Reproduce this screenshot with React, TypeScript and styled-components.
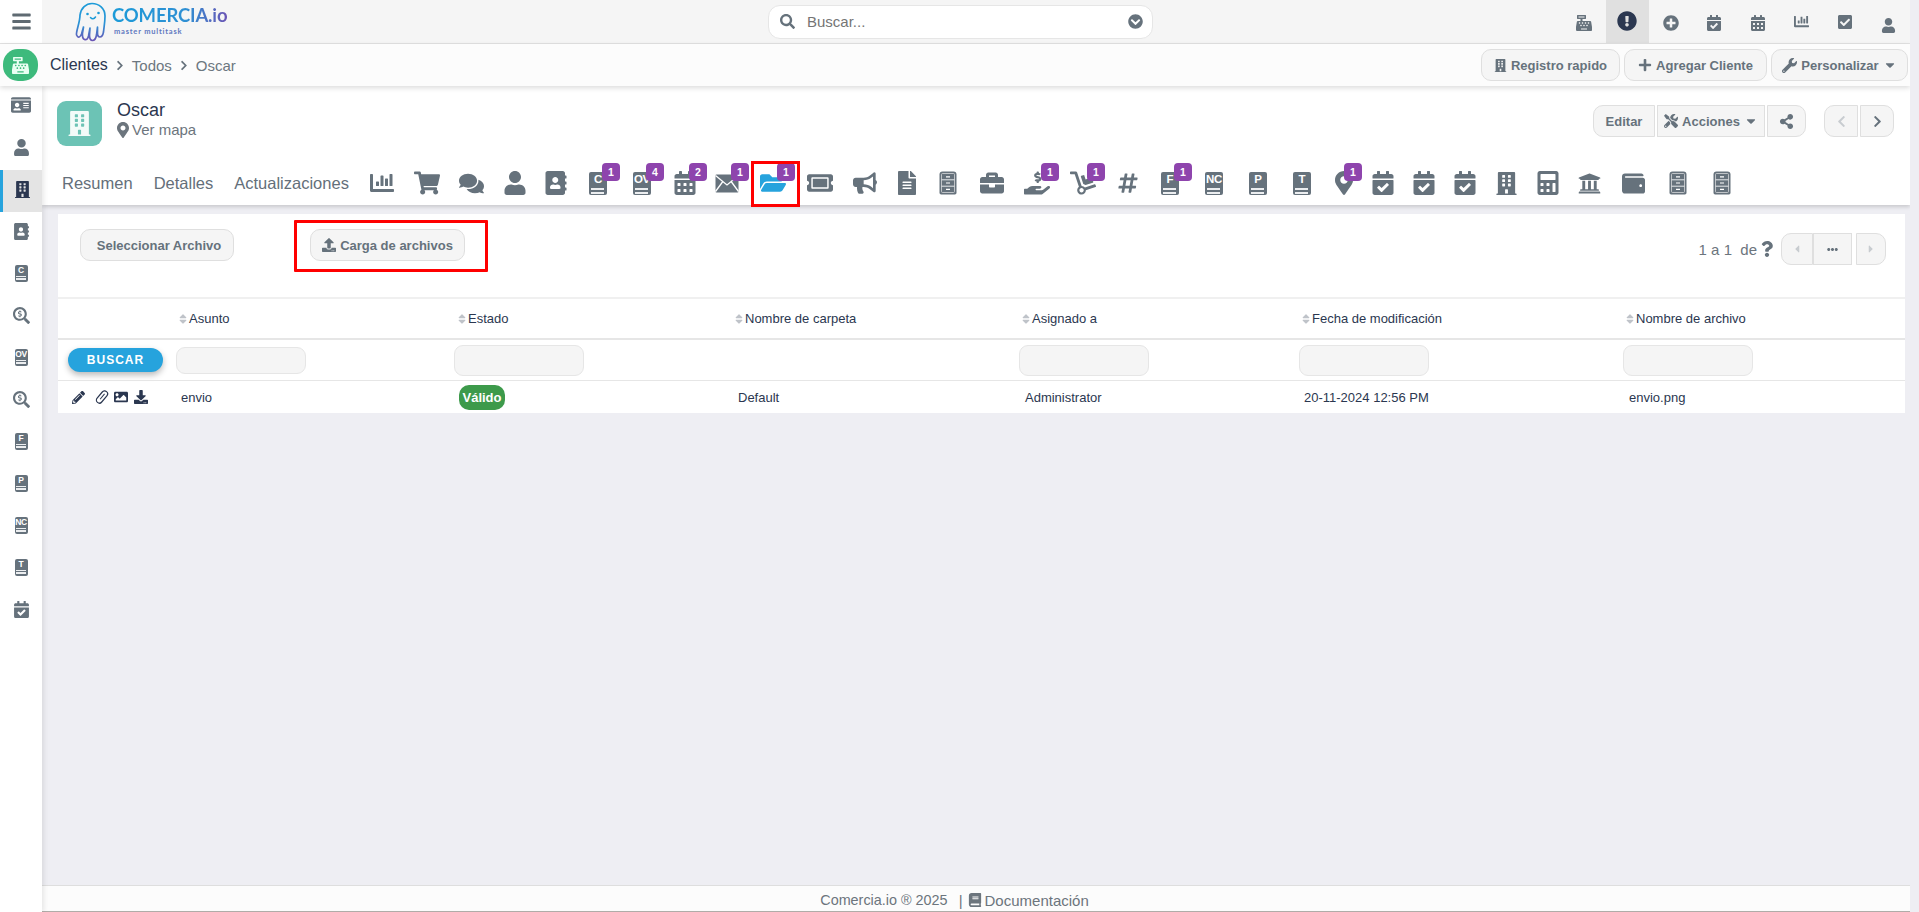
import React from "react";
import styled, { createGlobalStyle } from "styled-components";
import {
  FaAddressBook, FaBars, FaBook, FaBriefcase, FaBuilding, FaBullhorn, FaCalculator, FaCalendarAlt,
  FaCalendarCheck, FaCaretDown, FaCaretLeft, FaCaretRight, FaCashRegister, FaChartBar, FaCheckSquare,
  FaChevronCircleDown, FaChevronLeft, FaChevronRight, FaComments, FaDolly, FaDownload, FaEllipsisH,
  FaExclamationCircle, FaFileAlt, FaFolderOpen, FaHandHoldingUsd, FaHashtag, FaIdCard, FaImage,
  FaMapMarkerAlt, FaPencilAlt, FaPlus, FaPlusCircle, FaQuestion, FaSearch, FaSearchDollar,
  FaShareAlt, FaShoppingCart, FaSort, FaTicketAlt, FaTools, FaUniversity, FaUpload, FaUser, FaWallet, FaWrench,
} from "react-icons/fa";

const GRAY = "#66727c";
const NAVY = "#2b3750";
const BLUE = "#26a3dd";

const Global = createGlobalStyle`
  html, body { margin: 0; padding: 0; height: 100%; overflow: hidden; background: #eeeef3; }
  body, button, input { font-family: "Liberation Sans", Arial, sans-serif; }
  * { box-sizing: border-box; }
`;

const Page = styled.div`
  display: flex;
  flex-direction: column;
  height: 912px;
  width: 1910px;
  overflow: hidden;
`;

/* ---------- top bar ---------- */
const TopBar = styled.header`
  flex: none;
  height: 44px;
  display: grid;
  grid-template-columns: 42px 726px 385px 1fr auto;
  align-items: stretch;
  background: #f5f5f5;
  border-bottom: 1px solid #e2e2e2;
`;
const MenuCell = styled.div`
  background: #fff;
  display: flex;
  align-items: center;
  justify-content: center;
  color: #5f6a72;
  font-size: 21px;
`;
const LogoBlock = styled.div`
  display: flex;
  align-items: center;
  padding-left: 33px;
  gap: 5px;
`;
const LogoTexts = styled.div`
  display: flex;
  flex-direction: column;
  margin-top: -3px;
`;
const LogoName = styled.span`
  font-family: Lato, sans-serif;
  font-weight: 700;
  font-size: 18.5px;
  line-height: 22px;
  letter-spacing: -0.15px;
  background: linear-gradient(90deg, #1c9bd8 0%, #2f8fd3 65%, #6a55b5 100%);
  -webkit-background-clip: text;
  background-clip: text;
  color: transparent;
`;
const LogoTag = styled.span`
  font-family: Lato, sans-serif;
  font-weight: 700;
  font-size: 7.5px;
  line-height: 9px;
  letter-spacing: 0.8px;
  margin: 0.5px 0 0 2px;
  color: #5f78c0;
`;
const SearchBox = styled.div`
  align-self: center;
  height: 34px;
  background: #fff;
  border: 1px solid #e6e6e6;
  border-radius: 12px;
  display: flex;
  align-items: center;
  padding: 0 9px 0 11px;
  color: ${GRAY};
  font-size: 15px;
`;
const SearchText = styled.span`
  flex: 1;
  margin-left: 12px;
  color: #757575;
  font-size: 15px;
`;
const TopIcons = styled.nav`
  display: flex;
  align-items: stretch;
`;
const TopIcon = styled.div<{ $active?: boolean; $size?: number; $down?: number; $up?: number }>`
  width: 43.5px;
  display: flex;
  align-items: center;
  justify-content: center;
  padding-top: ${(p) => p.$down ?? 0}px;
  padding-bottom: ${(p) => p.$up ?? 0}px;
  font-size: ${(p) => p.$size ?? 16}px;
  color: ${(p) => (p.$active ? NAVY : GRAY)};
  background: ${(p) => (p.$active ? "#e0e0e0" : "transparent")};
`;

/* ---------- breadcrumb ---------- */
const CrumbBar = styled.div`
  flex: none;
  position: relative;
  z-index: 3;
  height: 42px;
  display: flex;
  align-items: center;
  background: #fcfcfc;
  box-shadow: 0 2px 5px rgba(0, 0, 0, 0.14);
  padding: 0 2px 0 3px;
`;
const AppPill = styled.div`
  width: 35px;
  height: 32px;
  border-radius: 15px;
  background: #3dba7c;
  color: #eafff3;
  font-size: 17px;
  display: flex;
  align-items: center;
  justify-content: center;
`;
const Crumbs = styled.div`
  flex: 1;
  display: flex;
  align-items: center;
  margin-left: 12px;
  font-size: 15px;
  color: #6c7780;
`;
const CrumbRoot = styled.span`
  color: #2b3750;
  font-size: 16px;
`;
const CrumbSep = styled.span`
  display: flex;
  font-size: 11px;
  width: 8px;
  justify-content: center;
  margin: 1px 8px 0;
  color: ${GRAY};
`;
const ButtonRow = styled.div<{ $gap: number }>`
  display: flex;
  align-items: center;
  gap: ${(p) => p.$gap}px;
`;
const Btn = styled.button<{ $w?: number; $pl?: number; $shape?: "all" | "left" | "right" | "none"; $muted?: boolean }>`
  height: 32px;
  width: ${(p) => (p.$w ? `${p.$w}px` : "auto")};
  padding: 0 0 0 ${(p) => p.$pl ?? 0}px;
  display: inline-flex;
  align-items: center;
  justify-content: center;
  gap: 4px;
  background: #f5f5f5;
  border: 1px solid #dfdfdf;
  border-radius: ${(p) =>
    p.$shape === "left" ? "10px 0 0 10px" : p.$shape === "right" ? "0 10px 10px 0" : p.$shape === "none" ? "0" : "10px"};
  color: ${(p) => (p.$muted ? "#c8ccd0" : GRAY)};
  font-size: 13px;
  font-weight: 700;
  svg { flex: none; }
`;
const Spacer = styled.span<{ $w: number }>`
  display: inline-block;
  width: ${(p) => p.$w}px;
`;

/* ---------- body ---------- */
const Body = styled.div`
  flex: 1;
  min-height: 0;
  display: flex;
`;
const Sidebar = styled.aside`
  flex: none;
  width: 42px;
  background: #fff;
  box-shadow: 2px 0 5px rgba(0, 0, 0, 0.09);
  position: relative;
  z-index: 2;
`;
const SideItem = styled.div<{ $active?: boolean }>`
  height: 42px;
  display: flex;
  align-items: center;
  justify-content: center;
  padding-bottom: 4px;
  font-size: 17px;
  color: ${(p) => (p.$active ? NAVY : GRAY)};
  background: ${(p) => (p.$active ? "#e4e4e4" : "transparent")};
  border-left: ${(p) => (p.$active ? `3px solid ${BLUE}` : "0")};
`;
const Main = styled.main`
  flex: 1;
  min-width: 0;
  display: flex;
  flex-direction: column;
`;

/* ---------- record header ---------- */
const RecordHeader = styled.section`
  flex: none;
  height: 119px;
  background: #fff;
  box-shadow: 0 2px 4px rgba(0, 0, 0, 0.16);
  display: flex;
  flex-direction: column;
`;
const RecordTop = styled.div`
  height: 77px;
  display: flex;
  align-items: flex-start;
  padding: 15px 16px 0 15px;
`;
const Avatar = styled.div`
  width: 45px;
  height: 45px;
  border-radius: 9px;
  background: #6cc3b5;
  color: #f3fbf9;
  display: flex;
  align-items: center;
  justify-content: center;
  font-size: 25px;
`;
const RecordNames = styled.div`
  flex: 1;
  margin: -1px 0 0 15px;
  display: flex;
  flex-direction: column;
  gap: 1px;
`;
const RecordName = styled.span`
  font-size: 18px;
  line-height: 20px;
  color: #2b3750;
`;
const MapLink = styled.span`
  font-size: 15px;
  line-height: 18px;
  color: #6c757d;
  display: flex;
  align-items: center;
  gap: 1px;
  margin-left: -2px;
`;
const RecordActions = styled(ButtonRow)`
  padding-top: 4px;
`;
const TabRow = styled.nav`
  height: 40px;
  display: flex;
  align-items: center;
  padding-left: 20px;
`;
const TextTab = styled.span`
  font-size: 16.5px;
  color: #646f7a;
  margin-right: 21px;
  &:nth-of-type(3) { margin-right: 11px; }
`;
const IconTab = styled.div<{ $w: number; $active?: boolean; $size?: number }>`
  position: relative;
  flex: none;
  width: ${(p) => p.$w}px;
  height: 40px;
  display: flex;
  align-items: center;
  justify-content: center;
  font-size: ${(p) => p.$size ?? 24}px;
  color: ${(p) => (p.$active ? BLUE : GRAY)};
`;
const Badge = styled.span<{ $left?: number }>`
  position: absolute;
  top: 0;
  left: calc(50% + ${(p) => p.$left ?? 4}px);
  width: 18px;
  height: 18px;
  border-radius: 4px;
  background: #8e44ad;
  color: #fff;
  font-size: 10.5px;
  font-weight: 700;
  display: flex;
  align-items: center;
  justify-content: center;
`;
const FolderMark = styled.span`
  position: absolute;
  inset: -2px -2px -4px 3px;
  border: 3px solid #f00;
  pointer-events: none;
`;
const DocLetter = styled.span<{ $small?: boolean }>`
  display: inline-flex;
  flex-direction: column;
  align-items: center;
  width: ${(p) => (p.$small ? 13 : 18)}px;
  height: ${(p) => (p.$small ? 17 : 23)}px;
  border-radius: 2px;
  background: ${GRAY};
  color: #fff;
  font-weight: 700;
  font-size: ${(p) => (p.$small ? 8.5 : 11.5)}px;
  line-height: ${(p) => (p.$small ? 9 : 13)}px;
  padding-top: 1px;
  letter-spacing: -0.3px;
  overflow: hidden;
`;
const DocLine = styled.span<{ $small?: boolean }>`
  flex: none;
  width: ${(p) => (p.$small ? 10 : 13)}px;
  height: ${(p) => (p.$small ? 1.5 : 2)}px;
  background: #eceef0;
  margin-top: ${(p) => (p.$small ? 1 : 2)}px;
`;

/* ---------- file card ---------- */
const Card = styled.section`
  flex: none;
  margin: 9px 5px 0 16px;
  background: #fff;
  display: flex;
  flex-direction: column;
`;
const Toolbar = styled.div`
  height: 83px;
  display: flex;
  align-items: flex-start;
  padding: 15px 19px 0 22px;
`;
const UploadWrap = styled.div`
  position: relative;
  margin-left: 76px;
`;
const UploadMark = styled.span`
  position: absolute;
  inset: -9px -23px -11px -16px;
  border: 3px solid #f00;
  border-radius: 1px;
  pointer-events: none;
`;
const Pager = styled.div`
  margin-left: auto;
  display: flex;
  align-items: center;
  margin-top: 4px;
  color: #6c757d;
  font-size: 15px;
`;
const PagerHelp = styled.span`
  display: flex;
  margin: 0 6px 0 2px;
  font-size: 16px;
  color: ${GRAY};
`;
const PagerBtns = styled.div`
  display: flex;
  align-items: center;
`;
const TableRow = styled.div<{ $h: number; $border: string }>`
  display: grid;
  grid-template-columns: 114px 279px 277px 287px 280px 324px 1fr;
  height: ${(p) => p.$h}px;
  align-items: center;
  border-top: ${(p) => p.$border};
`;
const HeadCell = styled.div`
  display: flex;
  align-items: center;
  padding-left: 5px;
  font-size: 13px;
  color: #2b3750;
  svg { color: #bfc3c9; font-size: 12px; }
`;
const FilterCell = styled.div<{ $pad: number }>`
  padding-left: ${(p) => p.$pad}px;
  display: flex;
  align-items: center;
`;
const FilterInput = styled.div<{ $h: number }>`
  width: 130px;
  height: ${(p) => p.$h}px;
  background: #f5f5f5;
  border: 1px solid #e6e6e6;
  border-radius: 9px;
`;
const SearchButton = styled.button`
  width: 95px;
  height: 24px;
  margin-left: 10px;
  border: 0;
  border-radius: 12px;
  background: ${BLUE};
  color: #fff;
  font-size: 12px;
  font-weight: 700;
  letter-spacing: 1px;
  box-shadow: 0 3px 6px rgba(0, 0, 0, 0.28);
`;
const ActionCell = styled.div`
  display: flex;
  align-items: center;
  padding-left: 14px;
  color: ${NAVY};
  font-size: 13px;
`;
const ActionGap = styled.span<{ $w: number }>`
  width: ${(p) => p.$w}px;
`;
const Cell = styled.div<{ $pad: number }>`
  padding-left: ${(p) => p.$pad}px;
  font-size: 13px;
  color: #2b3750;
`;
const StatusPill = styled.span`
  display: inline-flex;
  align-items: center;
  justify-content: center;
  width: 46px;
  height: 25px;
  border-radius: 10px;
  background: #3d9a4b;
  color: #fff;
  font-size: 13px;
  font-weight: 700;
`;
const Filler = styled.div`
  flex: 1;
`;
const Footer = styled.footer`
  flex: none;
  height: 27px;
  background: #fcfcfc;
  border-top: 1px solid #dedede;
  border-bottom: 1px solid #b0aca8;
  display: flex;
  align-items: center;
  justify-content: center;
  padding: 3px 43px 0 0;
  font-size: 15px;
  color: #6c757d;
`;
const FootCopy = styled.span`
  font-size: 14.4px;
`;
const FootSep = styled.span`
  margin: 0 5px 0 11px;
`;
const FootLink = styled.span`
  display: inline-flex;
  align-items: center;
  gap: 3px;
`;

const Octopus = () => (
  <svg width="32" height="40" viewBox="0 0 32 40" fill="none">
    <defs>
      <linearGradient id="octo" x1="0" y1="0" x2="0" y2="1">
        <stop offset="0" stopColor="#1c9bd8" />
        <stop offset="0.55" stopColor="#2a93d6" />
        <stop offset="1" stopColor="#6a55b5" />
      </linearGradient>
    </defs>
    <path
      d="M1.500 31C2.500 25 5 19 5 13C6 6 11 1.500 17 1.500C24 1.500 30 6.500 30 14C30 20 29 25 28.500 30Q27.500 35 25 35Q22.500 35 22.500 31L22.500 25L21.500 33Q20.500 38.500 17.500 38.500Q14.500 38.500 14.500 33L15 26L13.500 34Q12.500 38.500 9.500 37.500Q7 36.500 7.500 31L8.500 25L6.500 32Q4.500 36.500 2.500 34.500Q1 33 1.500 31Z"
      stroke="url(#octo)"
      strokeWidth="1.700"
      strokeLinejoin="round"
    />
    <circle cx="12.500" cy="12" r="1.300" fill="#1c9bd8" />
    <circle cx="23.500" cy="11" r="1.300" fill="#1c9bd8" />
    <path d="M15.500 15.500C17 17.300 19 17.300 20.500 15" stroke="#1c9bd8" strokeWidth="1.500" strokeLinecap="round" />
  </svg>
);

const Cabinet = () => (
  <svg width="18" height="24" viewBox="0 0 18 24" fill="none">
    <path d="M3.500 0.500H14.500C16.500 0.500 17.500 1.500 17.500 3.500V21.500C17.500 23 16.700 23.500 15 23.500H3C1.300 23.500 0.500 23 0.500 21.500V3.500C0.500 1.500 1.500 0.500 3.500 0.500Z" fill={GRAY} />
    <rect x="2.500" y="2.500" width="13" height="19" rx="1" stroke="#d5d8db" strokeWidth="0.800" />
    <path d="M2.500 8.800H15.500M2.500 15.200H15.500" stroke="#e7e9eb" strokeWidth="1" />
    <path d="M7 5.800H11M7 12H11M7 18.400H11" stroke="#fff" strokeWidth="1.200" />
  </svg>
);

const Envelope = () => (
  <svg width="24" height="19" viewBox="0 0 24 19">
    <rect x="0.500" y="0.500" width="23" height="18" rx="1" fill={GRAY} />
    <path d="M0.500 1.500L12 11L23.500 1.500M0.500 17.500L7.500 8M23.500 17.500L16.500 8" fill="none" stroke="#fff" strokeWidth="1.300" />
  </svg>
);

const Clip = () => (
  <svg width="14" height="14" viewBox="0 0 14 14" fill="none" stroke={NAVY}>
    <g transform="rotate(40 7 7)">
      <rect x="4" y="0" width="6" height="14" rx="3" strokeWidth="1.200" />
      <path d="M7 3V10" strokeWidth="1" />
    </g>
  </svg>
);

const LetterDoc = ({ t, small }: { t: string; small?: boolean }) => (
  <DocLetter $small={small}>
    {t}
    <DocLine $small={small} />
    <DocLine $small={small} />
  </DocLetter>
);

type Tab = { w: number; icon: React.ReactNode; badge?: string; size?: number; active?: boolean; mark?: boolean; left?: number };

const tabs: Tab[] = [
  { w: 44, icon: <FaChartBar /> },
  { w: 46, icon: <FaShoppingCart />, size: 26 },
  { w: 44, icon: <FaComments />, size: 25 },
  { w: 42, icon: <FaUser /> },
  { w: 40, icon: <FaAddressBook /> },
  { w: 44, icon: <LetterDoc t="C" />, badge: "1" },
  { w: 44, icon: <LetterDoc t="OV" />, badge: "4" },
  { w: 42, icon: <FaCalendarAlt />, badge: "2" },
  { w: 42, icon: <Envelope />, badge: "1" },
  { w: 50, icon: <FaFolderOpen />, badge: "1", size: 26, active: true, mark: true },
  { w: 44, icon: <FaTicketAlt />, size: 26 },
  { w: 46, icon: <FaBullhorn /> },
  { w: 38, icon: <FaFileAlt /> },
  { w: 44, icon: <Cabinet /> },
  { w: 44, icon: <FaBriefcase /> },
  { w: 46, icon: <FaHandHoldingUsd />, badge: "1", size: 26 },
  { w: 46, icon: <FaDolly />, badge: "1", size: 26 },
  { w: 44, icon: <FaHashtag />, size: 22 },
  { w: 40, icon: <LetterDoc t="F" />, badge: "1" },
  { w: 48, icon: <LetterDoc t="NC" /> },
  { w: 40, icon: <LetterDoc t="P" /> },
  { w: 48, icon: <LetterDoc t="T" /> },
  { w: 36, icon: <FaMapMarkerAlt />, badge: "1", left: 0 },
  { w: 42, icon: <FaCalendarCheck /> },
  { w: 40, icon: <FaCalendarCheck /> },
  { w: 42, icon: <FaCalendarCheck /> },
  { w: 42, icon: <FaBuilding />, size: 23 },
  { w: 40, icon: <FaCalculator /> },
  { w: 44, icon: <FaUniversity />, size: 23 },
  { w: 44, icon: <FaWallet />, size: 23 },
  { w: 44, icon: <Cabinet /> },
  { w: 44, icon: <Cabinet /> },
];

const sideItems: { icon: React.ReactNode; active?: boolean }[] = [
  { icon: <FaIdCard size={20} /> },
  { icon: <FaUser /> },
  { icon: <FaBuilding />, active: true },
  { icon: <FaAddressBook /> },
  { icon: <LetterDoc t="C" small /> },
  { icon: <FaSearchDollar /> },
  { icon: <LetterDoc t="OV" small /> },
  { icon: <FaSearchDollar /> },
  { icon: <LetterDoc t="F" small /> },
  { icon: <LetterDoc t="P" small /> },
  { icon: <LetterDoc t="NC" small /> },
  { icon: <LetterDoc t="T" small /> },
  { icon: <FaCalendarCheck /> },
];

const topIcons: { icon: React.ReactNode; active?: boolean; size?: number; down?: number; up?: number }[] = [
  { icon: <FaCashRegister />, size: 16, down: 2 },
  { icon: <FaExclamationCircle />, active: true, size: 20, up: 2 },
  { icon: <FaPlusCircle />, size: 16, down: 2 },
  { icon: <FaCalendarCheck />, size: 16, down: 2 },
  { icon: <FaCalendarAlt />, size: 16, down: 2 },
  { icon: <FaChartBar />, size: 15 },
  { icon: <FaCheckSquare />, size: 16 },
  { icon: <FaUser />, size: 15, down: 8 },
];

const heads = ["Asunto", "Estado", "Nombre de carpeta", "Asignado a", "Fecha de modificación", "Nombre de archivo"];

export default function App() {
  return (
    <Page>
      <Global />
      <TopBar>
        <MenuCell>
          <FaBars />
        </MenuCell>
        <LogoBlock>
          <Octopus />
          <LogoTexts>
            <LogoName>COMERCIA.io</LogoName>
            <LogoTag>master multitask</LogoTag>
          </LogoTexts>
        </LogoBlock>
        <SearchBox>
          <FaSearch />
          <SearchText>Buscar...</SearchText>
          <FaChevronCircleDown />
        </SearchBox>
        <span />
        <TopIcons>
          {topIcons.map((t, i) => (
            <TopIcon key={i} $active={t.active} $size={t.size} $down={t.down} $up={t.up}>
              {t.icon}
            </TopIcon>
          ))}
        </TopIcons>
      </TopBar>

      <CrumbBar>
        <AppPill>
          <FaCashRegister />
        </AppPill>
        <Crumbs>
          <CrumbRoot>Clientes</CrumbRoot>
          <CrumbSep>
            <FaChevronRight />
          </CrumbSep>
          Todos
          <CrumbSep>
            <FaChevronRight />
          </CrumbSep>
          Oscar
        </Crumbs>
        <ButtonRow $gap={4}>
          <Btn $w={139}>
            <FaBuilding size={13} />
            Registro rapido
          </Btn>
          <Btn $w={143}>
            <FaPlus size={14} />
            Agregar Cliente
          </Btn>
          <Btn $w={137}>
            <FaWrench size={15} />
            Personalizar
            <FaCaretDown size={14} />
          </Btn>
        </ButtonRow>
      </CrumbBar>

      <Body>
        <Sidebar>
          {sideItems.map((s, i) => (
            <SideItem key={i} $active={s.active}>
              {s.icon}
            </SideItem>
          ))}
        </Sidebar>
        <Main>
          <RecordHeader>
            <RecordTop>
              <Avatar>
                <FaBuilding />
              </Avatar>
              <RecordNames>
                <RecordName>Oscar</RecordName>
                <MapLink>
                  <FaMapMarkerAlt size={16} />
                  Ver mapa
                </MapLink>
              </RecordNames>
              <RecordActions $gap={2}>
                <Btn $w={62} $shape="left">
                  Editar
                </Btn>
                <Btn $w={108} $shape="none">
                  <FaTools size={14} />
                  Acciones
                  <FaCaretDown size={14} />
                </Btn>
                <Btn $w={39} $shape="right">
                  <FaShareAlt size={15} />
                </Btn>
                <Spacer $w={14} />
                <Btn $w={34} $shape="left" $muted>
                  <FaChevronLeft size={13} />
                </Btn>
                <Btn $w={34} $shape="right">
                  <FaChevronRight size={13} />
                </Btn>
              </RecordActions>
            </RecordTop>
            <TabRow>
              <TextTab>Resumen</TextTab>
              <TextTab>Detalles</TextTab>
              <TextTab>Actualizaciones</TextTab>
              {tabs.map((t, i) => (
                <IconTab key={i} $w={t.w} $size={t.size} $active={t.active}>
                  {t.icon}
                  {t.badge && <Badge $left={t.left}>{t.badge}</Badge>}
                  {t.mark && <FolderMark />}
                </IconTab>
              ))}
            </TabRow>
          </RecordHeader>

          <Card>
            <Toolbar>
              <Btn $w={154} $pl={4}>
                Seleccionar Archivo
              </Btn>
              <UploadWrap>
                <Btn $w={155}>
                  <FaUpload size={14} />
                  Carga de archivos
                </Btn>
                <UploadMark />
              </UploadWrap>
              <Pager>
                <span>1 a 1&nbsp; de</span>
                <PagerHelp>
                  <FaQuestion />
                </PagerHelp>
                <PagerBtns>
                  <Btn $w={32} $shape="left" $muted>
                    <FaCaretLeft size={12} />
                  </Btn>
                  <Btn $w={39} $shape="none">
                    <FaEllipsisH size={11} />
                  </Btn>
                  <Spacer $w={4} />
                  <Btn $w={30} $shape="right" $muted>
                    <FaCaretRight size={12} />
                  </Btn>
                </PagerBtns>
              </Pager>
            </Toolbar>

            <TableRow $h={41} $border="2px solid #f0f0f0">
              <span />
              {heads.map((h) => (
                <HeadCell key={h}>
                  <FaSort />
                  {h}
                </HeadCell>
              ))}
            </TableRow>
            <TableRow $h={42} $border="2px solid #e6e6e6">
              <SearchButton>BUSCAR</SearchButton>
              <FilterCell $pad={4}>
                <FilterInput $h={27} />
              </FilterCell>
              <FilterCell $pad={3}>
                <FilterInput $h={31} />
              </FilterCell>
              <span />
              <FilterCell $pad={4}>
                <FilterInput $h={31} />
              </FilterCell>
              <FilterCell $pad={4}>
                <FilterInput $h={31} />
              </FilterCell>
              <FilterCell $pad={4}>
                <FilterInput $h={31} />
              </FilterCell>
            </TableRow>
            <TableRow $h={33} $border="1px solid #e6e6e6">
              <ActionCell>
                <FaPencilAlt />
                <ActionGap $w={10} />
                <Clip />
                <ActionGap $w={5} />
                <FaImage size={14} />
                <ActionGap $w={6} />
                <FaDownload size={14} />
              </ActionCell>
              <Cell $pad={9}>envio</Cell>
              <Cell $pad={8}>
                <StatusPill>Válido</StatusPill>
              </Cell>
              <Cell $pad={10}>Default</Cell>
              <Cell $pad={10}>Administrator</Cell>
              <Cell $pad={9}>20-11-2024 12:56 PM</Cell>
              <Cell $pad={10}>envio.png</Cell>
            </TableRow>
          </Card>

          <Filler />
          <Footer>
            <FootCopy>Comercia.io ® 2025</FootCopy>
            <FootSep>|</FootSep>
            <FootLink>
              <FaBook size={14} />
              Documentación
            </FootLink>
          </Footer>
        </Main>
      </Body>
    </Page>
  );
}
